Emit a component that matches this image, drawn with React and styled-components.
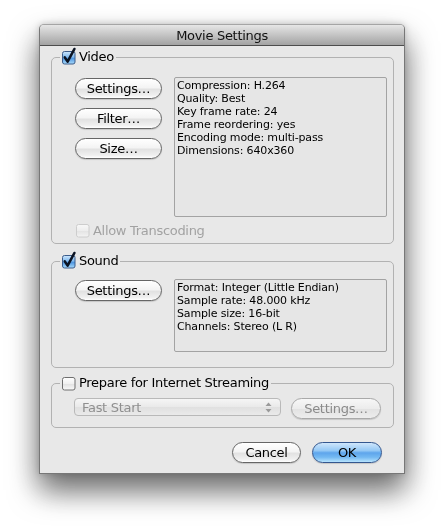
import React from 'react'
import styled, { createGlobalStyle } from 'styled-components'

const GlobalStyle = createGlobalStyle`
  html, body {
    margin: 0;
    background: #fff;
  }
  body {
    min-height: 528px;
    font-family: "DejaVu Sans", "Liberation Sans", sans-serif;
    color: #000;
  }
`

const Window = styled.div`
  margin: 24px 0 0 39px;
  width: 366px;
  box-sizing: border-box;
  border: 1px solid #777;
  border-top-color: #a5a5a5;
  border-radius: 5px 5px 0 0;
  background: #e8e8e8;
  filter: drop-shadow(0 16px 15px rgba(0, 0, 0, 0.55)) drop-shadow(0 0 3px rgba(0, 0, 0, 0.2));
  display: flex;
  flex-direction: column;
`

const TitleBar = styled.div`
  height: 21px;
  box-sizing: border-box;
  border-bottom: 1px solid #4d4d4d;
  border-radius: 4px 4px 0 0;
  background: linear-gradient(#e6e6e6, #c4c4c4 50%, #a3a3a3);
  display: flex;
  align-items: center;
  justify-content: center;
  font-size: 13px;
  letter-spacing: -0.3px;
  color: #111;
`

const Body = styled.div`
  padding: 3px 10px 10px 11px;
  display: flex;
  flex-direction: column;
`

const Group = styled.fieldset`
  margin: ${p => p.$gap || 0}px 0 0;
  padding: 0;
  min-inline-size: 0;
  border: 1px solid #b2b2b2;
  border-radius: 5px;
`

const Legend = styled.legend`
  margin-left: 8px;
  padding: 0 2px;
  height: 16px;
  display: flex;
  align-items: center;
  gap: 4px;
  font-size: 13px;
  letter-spacing: -0.3px;
  line-height: 16px;
`

const GroupInner = styled.div`
  padding: ${p => p.$pad};
  display: flex;
  flex-direction: column;
`

const Row = styled.div`
  display: flex;
  align-items: flex-start;
  gap: ${p => p.$gap || 12}px;
`

const ButtonColumn = styled.div`
  width: 87px;
  padding-top: 1px;
  display: flex;
  flex-direction: column;
  gap: 9px;
`

const Button = styled.div`
  width: ${p => p.$w || 87}px;
  height: 21px;
  box-sizing: border-box;
  border: 1px solid ${p => (p.$disabled ? '#a9a9a9' : '#666')};
  border-radius: 11px;
  background: ${p =>
    p.$disabled
      ? 'linear-gradient(#f7f7f7, #ececec 50%, #e2e2e2 52%, #ededed)'
      : 'linear-gradient(#ffffff, #f4f4f4 45%, #e2e2e2 55%, #efefef 85%, #ffffff)'};
  box-shadow: 0 1px 1px rgba(0, 0, 0, 0.15);
  display: flex;
  align-items: center;
  justify-content: center;
  font-size: 13px;
  letter-spacing: -0.3px;
  color: ${p => (p.$disabled ? '#8a8a8a' : '#000')};
  flex: none;
`

const DefaultButton = styled(Button)`
  border-color: #34578f;
  background: linear-gradient(#cfe6fb, #94c8f5 40%, #5ea5ec 52%, #74b9f2 75%, #b7e3fd);
`

const InfoBox = styled.div`
  width: 213px;
  height: ${p => p.$h}px;
  box-sizing: border-box;
  border: 1px solid #a3a3a3;
  border-radius: 2px;
  background: #e6e6e6;
  padding: 1px 0 0 2px;
  font-size: 11px;
  letter-spacing: -0.15px;
  line-height: 13px;
  flex: none;
`

const InfoLine = styled.div`
  white-space: nowrap;
`

const OptionRow = styled.div`
  margin-top: 5px;
  padding-left: 1px;
  height: 16px;
  display: flex;
  align-items: center;
  gap: 4px;
  font-size: 13px;
  letter-spacing: -0.3px;
  color: #a2a2a2;
`

const Popup = styled.div`
  width: 207px;
  height: 18px;
  box-sizing: border-box;
  border: 1px solid #b9b9b9;
  border-radius: 4px;
  background: linear-gradient(#f5f5f5, #e9e9e9 50%, #e0e0e0 52%, #eaeaea);
  display: flex;
  align-items: center;
  justify-content: space-between;
  padding: 0 8px 0 7px;
  font-size: 13px;
  letter-spacing: -0.3px;
  color: #8f8f8f;
`

const Footer = styled.div`
  margin-top: 14px;
  padding-right: 12px;
  display: flex;
  justify-content: flex-end;
  gap: 11px;
`

const BoxSvg = styled.svg`
  overflow: visible;
  flex: none;
`

const Checkbox = ({ on, disabled }) => (
  <BoxSvg width="13" height="13" viewBox="0 0 13 13">
    <defs>
      <linearGradient id="cbOn" x1="0" y1="0" x2="0" y2="1">
        <stop offset="0" stopColor="#cfe7fc" />
        <stop offset="0.45" stopColor="#7fb9ef" />
        <stop offset="0.55" stopColor="#4f96e0" />
        <stop offset="1" stopColor="#a9dcfc" />
      </linearGradient>
      <linearGradient id="cbOff" x1="0" y1="0" x2="0" y2="1">
        <stop offset="0" stopColor="#ffffff" />
        <stop offset="0.5" stopColor="#f0f0f0" />
        <stop offset="0.55" stopColor="#e3e3e3" />
        <stop offset="1" stopColor="#fafafa" />
      </linearGradient>
    </defs>
    <rect
      x="0.5"
      y="0.5"
      width="12.5"
      height="12.5"
      rx="2"
      fill={on ? 'url(#cbOn)' : 'url(#cbOff)'}
      stroke={on ? '#3c5c8a' : disabled ? '#c2c2c2' : '#6f6f6f'}
      opacity={disabled ? 0.7 : 1}
    />
    {on && (
      <path
        d="M2.8 6.4 L5.6 10.6 L12.4 -2"
        fill="none"
        stroke="#0b1322"
        strokeWidth="2.6"
        strokeLinecap="round"
        strokeLinejoin="round"
      />
    )}
  </BoxSvg>
)

const Stepper = () => (
  <svg width="7" height="11" viewBox="0 0 7 11">
    <path d="M3.5 0.5 L6.5 4 L0.5 4 Z" fill="#9a9a9a" />
    <path d="M3.5 10.5 L6.5 7 L0.5 7 Z" fill="#9a9a9a" />
  </svg>
)

const videoInfo = [
  'Compression: H.264',
  'Quality: Best',
  'Key frame rate: 24',
  'Frame reordering: yes',
  'Encoding mode: multi-pass',
  'Dimensions: 640x360',
]

const soundInfo = [
  'Format: Integer (Little Endian)',
  'Sample rate: 48.000 kHz',
  'Sample size: 16-bit',
  'Channels: Stereo (L R)',
]

export default function App() {
  return (
    <>
      <GlobalStyle />
      <Window>
        <TitleBar>Movie Settings</TitleBar>
        <Body>
          <Group>
            <Legend>
              <Checkbox on />
              Video
            </Legend>
            <GroupInner $pad="12px 6px 5px 23px">
              <Row>
                <ButtonColumn>
                  <Button>Settings…</Button>
                  <Button>Filter…</Button>
                  <Button>Size…</Button>
                </ButtonColumn>
                <InfoBox $h={140}>
                  {videoInfo.map(line => (
                    <InfoLine key={line}>{line}</InfoLine>
                  ))}
                </InfoBox>
              </Row>
              <OptionRow>
                <Checkbox disabled />
                Allow Transcoding
              </OptionRow>
            </GroupInner>
          </Group>

          <Group $gap={9}>
            <Legend>
              <Checkbox on />
              Sound
            </Legend>
            <GroupInner $pad="10px 6px 15px 23px">
              <Row>
                <ButtonColumn>
                  <Button>Settings…</Button>
                </ButtonColumn>
                <InfoBox $h={73}>
                  {soundInfo.map(line => (
                    <InfoLine key={line}>{line}</InfoLine>
                  ))}
                </InfoBox>
              </Row>
            </GroupInner>
          </Group>

          <Group $gap={7}>
            <Legend>
              <Checkbox />
              Prepare for Internet Streaming
            </Legend>
            <GroupInner $pad="7px 0 8px 22px">
              <Row $gap={10}>
                <Popup>
                  Fast Start
                  <Stepper />
                </Popup>
                <Button $disabled $w={90}>Settings…</Button>
              </Row>
            </GroupInner>
          </Group>

          <Footer>
            <Button $w={69}>Cancel</Button>
            <DefaultButton $w={70}>OK</DefaultButton>
          </Footer>
        </Body>
      </Window>
    </>
  )
}
